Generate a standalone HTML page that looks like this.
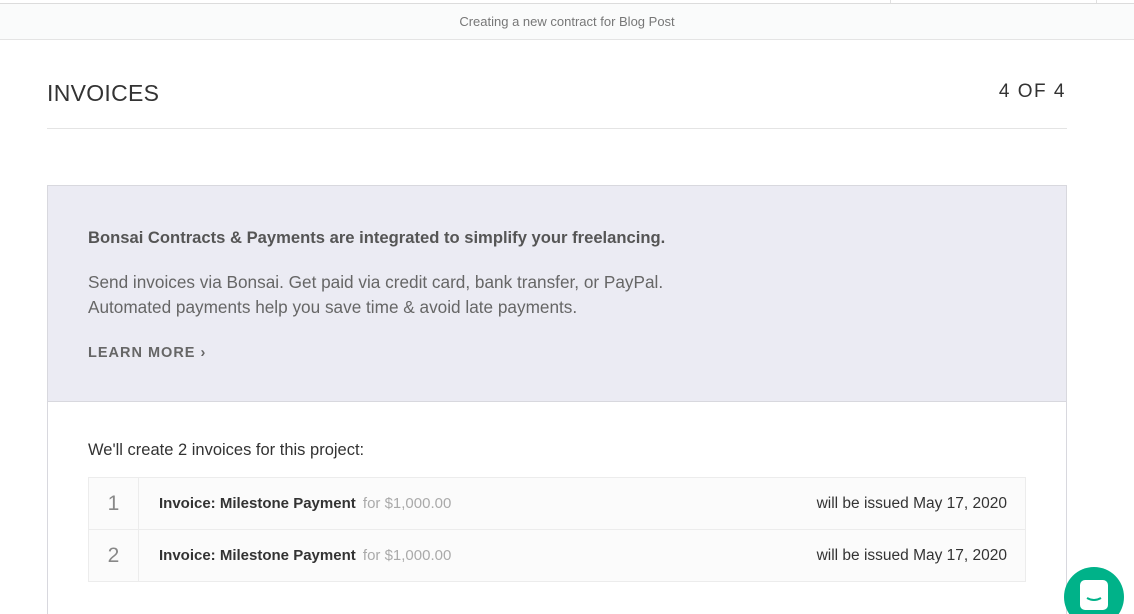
<!DOCTYPE html>
<html><head><style>
*{margin:0;padding:0;box-sizing:border-box}
html,body{width:1134px;height:614px;overflow:hidden}
body{background:#fff;font-family:"Liberation Sans",sans-serif;position:relative;color:#333}
.top{position:absolute;left:0;top:3px;width:1134px;height:37px;background:#fafbfb;border-top:1px solid #dcdcdc;border-bottom:1px solid #e4e4e4;text-align:center;font-size:13px;color:#777;line-height:36px}
.vl{position:absolute;top:0;width:1px;height:3px;background:#e0e0e0}
h1{position:absolute;left:47px;top:80px;font-size:23px;font-weight:normal;color:#333;letter-spacing:.3px}
.cnt{position:absolute;right:68px;top:81px;font-size:19px;color:#333;letter-spacing:1.5px}
.hr{position:absolute;left:47px;top:128px;width:1020px;height:1px;background:#e4e4e4}
.box{position:absolute;left:47px;top:185px;width:1020px;height:429px;border:1px solid #d8d8de;border-bottom:none}
.gray{background:#ebebf3;height:216px;border-bottom:1px solid #d8d8de;padding:42px 40px 0 40px;color:#666}
.b{font-weight:bold;font-size:16.6px;color:#555}
.p{font-size:17.2px;line-height:25px;margin-top:22px;color:#666}
.lm{margin-top:25px;font-weight:bold;font-size:14.5px;letter-spacing:1px;color:#666}
.we{position:absolute;left:40px;top:255px;font-size:16.5px;color:#333}
table{position:absolute;left:40px;top:291px;width:938px;border-collapse:collapse;background:#fbfbfb}
td{border-top:1px solid #ececec;border-bottom:1px solid #ececec;height:52px;font-size:15px}
td.n{width:50px;text-align:center;font-size:21px;color:#888;border:1px solid #ececec}
td.d{padding-left:20px}
td.d b{color:#333}
td.d span{color:#aaa;margin-left:3px}
td.r{text-align:right;padding-right:18px;color:#333;font-size:15.5px;border-right:1px solid #ececec}
.cw{position:absolute;left:1060px;top:560px;width:74px;height:54px;overflow:hidden}
.chat{position:absolute;left:4px;top:7px;width:60px;height:60px;border-radius:50%;background:#00b289}
.chat i{position:absolute;left:16px;top:13px;width:28px;height:30px;background:#fff;border-radius:5px}
</style></head><body>
<div class="vl" style="left:890px"></div><div class="vl" style="left:1096px"></div>
<div class="top">Creating a new contract for Blog Post</div>
<h1>INVOICES</h1>
<div class="cnt">4 OF 4</div>
<div class="hr"></div>
<div class="box">
<div class="gray">
<div class="b">Bonsai Contracts &amp; Payments are integrated to simplify your freelancing.</div>
<div class="p">Send invoices via Bonsai. Get paid via credit card, bank transfer, or PayPal.<br>Automated payments help you save time &amp; avoid late payments.</div>
<div class="lm">LEARN MORE ›</div>
</div>
<div class="we">We'll create 2 invoices for this project:</div>
<table>
<tr><td class="n">1</td><td class="d"><b>Invoice: Milestone Payment</b> <span>for $1,000.00</span></td><td class="r">will be issued May 17, 2020</td></tr>
<tr><td class="n">2</td><td class="d"><b>Invoice: Milestone Payment</b> <span>for $1,000.00</span></td><td class="r">will be issued May 17, 2020</td></tr>
</table>
</div>
<div class="cw"><div class="chat"><i></i><svg style="position:absolute;left:16px;top:13px" width="28" height="30"><path d="M7 18 Q14 22 21 18" stroke="#00b289" stroke-width="2" fill="none"/></svg></div></div>
</body></html>
